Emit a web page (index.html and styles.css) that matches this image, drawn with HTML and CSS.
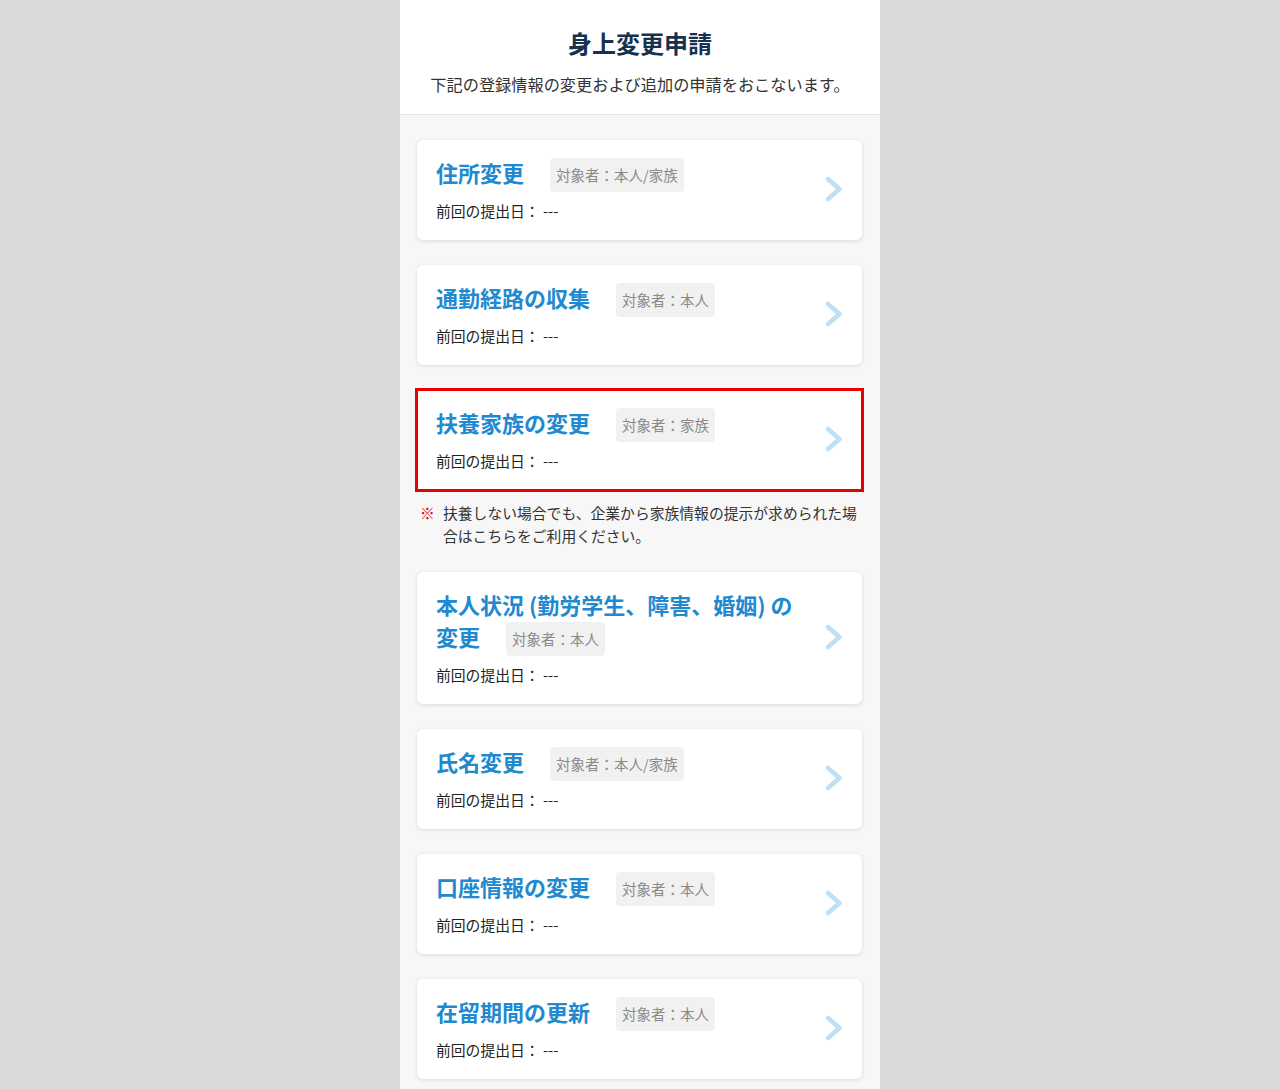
FILE: index.html
```html
<!DOCTYPE html>
<html lang="ja">

<head>
    <meta charset="UTF-8">
    <meta name="viewport" content="width=device-width, initial-scale=1.0">
    <title>身上変更申請</title>
    <link rel="stylesheet" href="styles.css">
</head>

<body>
    <div class="page">
        <header class="header">
            <h1>身上変更申請</h1>
            <p class="lead">下記の登録情報の変更および追加の申請をおこないます。</p>
        </header>

        <main class="list">
            <a class="card" href="#">
                <div class="card-body">
                    <h2 class="card-title">住所変更<span class="tag">対象者：本人/家族</span></h2>
                    <p class="last-date">前回の提出日： ---</p>
                </div>
                <svg class="chevron" viewBox="0 0 18 26" width="18" height="26"><path d="M3 3 L14.5 13 L3 23" /></svg>
            </a>

            <a class="card" href="#">
                <div class="card-body">
                    <h2 class="card-title">通勤経路の収集<span class="tag">対象者：本人</span></h2>
                    <p class="last-date">前回の提出日： ---</p>
                </div>
                <svg class="chevron" viewBox="0 0 18 26" width="18" height="26"><path d="M3 3 L14.5 13 L3 23" /></svg>
            </a>

            <a class="card card-marked has-note" href="#">
                <div class="card-body">
                    <h2 class="card-title">扶養家族の変更<span class="tag">対象者：家族</span></h2>
                    <p class="last-date">前回の提出日： ---</p>
                </div>
                <svg class="chevron" viewBox="0 0 18 26" width="18" height="26"><path d="M3 3 L14.5 13 L3 23" /></svg>
            </a>
            <p class="note"><span class="note-mark">※</span><span>扶養しない場合でも、企業から家族情報の提示が求められた場合はこちらをご利用ください。</span></p>

            <a class="card" href="#">
                <div class="card-body">
                    <h2 class="card-title">本人状況 (勤労学生、障害、婚姻) の<span class="nowrap">変更</span><span class="tag">対象者：本人</span></h2>
                    <p class="last-date">前回の提出日： ---</p>
                </div>
                <svg class="chevron" viewBox="0 0 18 26" width="18" height="26"><path d="M3 3 L14.5 13 L3 23" /></svg>
            </a>

            <a class="card" href="#">
                <div class="card-body">
                    <h2 class="card-title">氏名変更<span class="tag">対象者：本人/家族</span></h2>
                    <p class="last-date">前回の提出日： ---</p>
                </div>
                <svg class="chevron" viewBox="0 0 18 26" width="18" height="26"><path d="M3 3 L14.5 13 L3 23" /></svg>
            </a>

            <a class="card" href="#">
                <div class="card-body">
                    <h2 class="card-title">口座情報の変更<span class="tag">対象者：本人</span></h2>
                    <p class="last-date">前回の提出日： ---</p>
                </div>
                <svg class="chevron" viewBox="0 0 18 26" width="18" height="26"><path d="M3 3 L14.5 13 L3 23" /></svg>
            </a>

            <a class="card" href="#">
                <div class="card-body">
                    <h2 class="card-title">在留期間の更新<span class="tag">対象者：本人</span></h2>
                    <p class="last-date">前回の提出日： ---</p>
                </div>
                <svg class="chevron" viewBox="0 0 18 26" width="18" height="26"><path d="M3 3 L14.5 13 L3 23" /></svg>
            </a>
        </main>
    </div>
</body>

</html>
```

FILE: styles.css
```css
body {
    margin: 0;
    background-color: #dadada;
    font-family: "Noto Sans CJK JP", "Noto Sans", sans-serif;
    color: #333;
}

.page {
    width: 480px;
    margin: 0 auto;
    min-height: 100vh;
    background-color: #f7f7f7;
}

.header {
    background-color: #fff;
    border-bottom: 1px solid #e6e6e6;
    padding: 27px 0 19px;
    text-align: center;
}

.header h1 {
    margin: 0;
    font-size: 24px;
    line-height: 32px;
    font-weight: bold;
    color: #16324f;
}

.header .lead {
    margin: 14px 0 0;
    font-size: 16.2px;
    line-height: 22px;
    color: #333;
}

.list {
    padding: 25px 18px 20px 17px;
}

.card {
    display: flex;
    align-items: center;
    background-color: #fff;
    border-radius: 6px;
    box-shadow: 0 1px 4px rgba(0, 0, 0, 0.12);
    padding: 16px 19px 19px 19px;
    margin-bottom: 25px;
    text-decoration: none;
    color: inherit;
}

.card-body {
    flex: 1;
}

.card-title {
    margin: 0;
    font-size: 22px;
    line-height: 32px;
    font-weight: bold;
    color: #2189cf;
}

.nowrap {
    white-space: nowrap;
}

.tag {
    display: inline-block;
    vertical-align: top;
    margin: 2px 0 0 26px;
    padding: 6px 6px;
    font-size: 14.5px;
    line-height: 22px;
    font-weight: normal;
    color: #8a8a8a;
    background-color: #f1f1f1;
    border-radius: 4px;
}

.last-date {
    margin: 9px 0 0;
    font-size: 14.8px;
    line-height: 20px;
    color: #222;
}

.chevron {
    flex: none;
    margin-left: 10px;
}

.chevron path {
    fill: none;
    stroke: #bde0f5;
    stroke-width: 4.5;
    stroke-linecap: round;
    stroke-linejoin: round;
}

.card-marked {
    outline: 3px solid #e60000;
    outline-offset: -1px;
    box-shadow: none;
    border-radius: 0;
}

.card.has-note {
    margin-bottom: 11px;
}

.note {
    display: flex;
    margin: 0 0 25px 3px;
    font-size: 14.8px;
    line-height: 23px;
    color: #333;
}

.note-mark {
    flex: none;
    width: 23px;
    font-weight: bold;
    color: #e60000;
}
```
